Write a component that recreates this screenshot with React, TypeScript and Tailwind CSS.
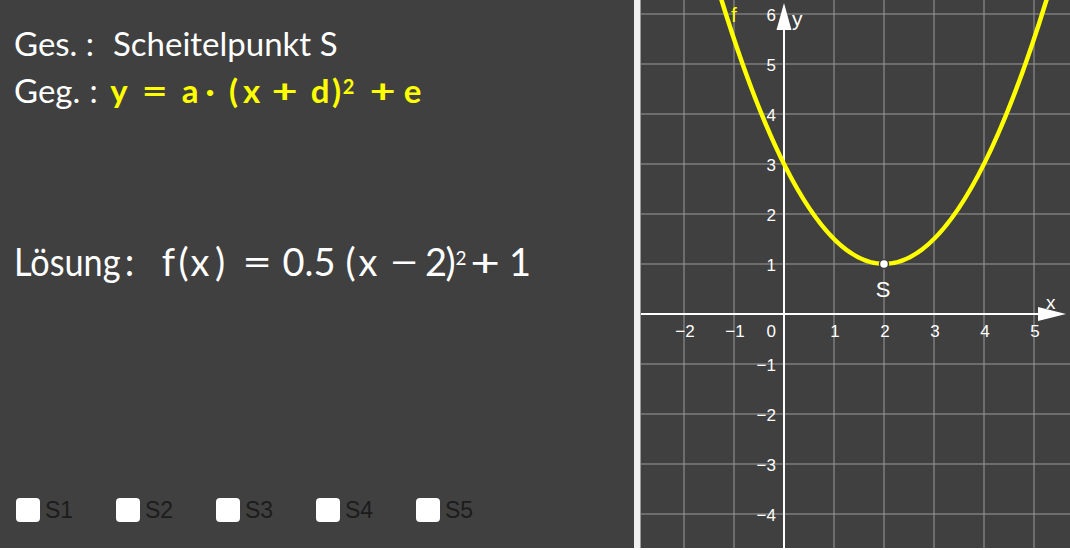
import React from "react";

const f = (x: number) => 0.5 * (x - 2) * (x - 2) + 1;
const SX = (x: number) => 784 + 50 * x;
const SY = (y: number) => 314 - 50 * y;

function Graph() {
  const vx = [684, 734, 834, 884, 934, 984, 1034];
  const hy = [14, 64, 114, 164, 214, 264, 364, 414, 464, 514];
  const x0 = -1.5,
    x1 = 5.5;
  const cy = f(x0) + (x0 - 2) * ((x1 - x0) / 2);
  const d = `M ${SX(x0)} ${SY(f(x0))} Q ${SX((x0 + x1) / 2)} ${SY(cy)} ${SX(x1)} ${SY(f(x1))}`;
  const xl: [number, string][] = [
    [-2, "\u22122"],
    [-1, "\u22121"],
    [1, "1"],
    [2, "2"],
    [3, "3"],
    [4, "4"],
    [5, "5"],
  ];
  const yl: [number, string][] = [
    [6, "6"],
    [5, "5"],
    [4, "4"],
    [3, "3"],
    [2, "2"],
    [1, "1"],
    [-1, "\u22121"],
    [-2, "\u22122"],
    [-3, "\u22123"],
    [-4, "\u22124"],
  ];
  return (
    <svg
      className="block h-full w-full"
      viewBox="641 0 429 548"
      preserveAspectRatio="none"
      style={{ fontFamily: '"Liberation Sans", Arial, sans-serif' }}
    >
      <rect x="641" y="0" width="429" height="548" fill="#404040" />
      {vx.map((x) => (
        <line key={"v" + x} x1={x} y1={0} x2={x} y2={548} stroke="#9a9a9a" strokeWidth={1} />
      ))}
      {hy.map((y) => (
        <line key={"h" + y} x1={641} y1={y} x2={1070} y2={y} stroke="#9a9a9a" strokeWidth={1} />
      ))}
      <line x1={641} y1={314} x2={1045} y2={314} stroke="#ffffff" strokeWidth={2} />
      <polygon points="1038,307 1066,314 1038,321" fill="#ffffff" />
      <line x1={784} y1={548} x2={784} y2={24} stroke="#ffffff" strokeWidth={2} />
      <polygon points="776.5,30 784,3 791.5,30" fill="#ffffff" />
      {xl.map(([v, t]) => (
        <text key={"xl" + v} x={SX(v) + 1} y={337} fill="#ffffff" fontSize={17} textAnchor="middle">
          {t}
        </text>
      ))}
      <text x={776} y={337} fill="#ffffff" fontSize={17} textAnchor="end">
        0
      </text>
      {yl.map(([v, t]) => (
        <text key={"yl" + v} x={776} y={SY(v) + 7} fill="#ffffff" fontSize={17} textAnchor="end">
          {t}
        </text>
      ))}
      <text x={1046} y={309} fill="#ffffff" fontSize={19}>
        x
      </text>
      <text x={792} y={26} fill="#ffffff" fontSize={21}>
        y
      </text>
      <text x={731} y={22} fill="#ffff00" fontSize={21}>
        f
      </text>
      <path d={d} fill="none" stroke="#ffff00" strokeWidth={4.5} />
      <circle cx={884} cy={264} r={4.5} fill="#ffffff" stroke="#404040" strokeWidth={1.5} />
      <text x={883} y={297} fill="#ffffff" fontSize={22} textAnchor="middle">
        S
      </text>
    </svg>
  );
}

type Tok = { t: string; l: number; r: number; c?: string; left?: boolean };

function TokenRow({ toks, className }: { toks: Tok[]; className: string }) {
  let prev = 0;
  return (
    <div className={"flex items-baseline whitespace-nowrap " + className}>
      {toks.map((k, i) => {
        const ml = k.l - prev;
        prev = k.r;
        return (
          <span
            key={i}
            className={"flex shrink-0 " + (k.left ? "justify-start " : "justify-center ") + (k.c ?? "")}
            style={{ marginLeft: ml, width: k.r - k.l }}
          >
            <span className="inline-block whitespace-nowrap">{k.t}</span>
          </span>
        );
      })}
    </div>
  );
}

const OP = "[&>span]:scale-x-[1.35]";
const Y = "font-bold text-[#ffff00]";

const geg: Tok[] = [
  { t: "Geg.", l: 14, r: 85, left: true },
  { t: ":", l: 90, r: 97 },
  { t: "y", l: 112, r: 126, c: Y },
  { t: "=", l: 141, r: 168, c: Y + " " + OP },
  { t: "a", l: 182, r: 198, c: Y },
  { t: "·", l: 206, r: 214, c: Y },
  { t: "(", l: 229, r: 238, c: Y },
  { t: "x", l: 240, r: 263, c: Y },
  { t: "+", l: 272, r: 298, c: Y + " " + OP },
  { t: "d", l: 310, r: 330, c: Y },
  { t: ")", l: 332, r: 341, c: Y },
  { t: "2", l: 343, r: 354, c: Y + " text-[20px] relative -top-[9px]" },
  { t: "+", l: 368, r: 397, c: Y + " " + OP },
  { t: "e", l: 403, r: 422, c: Y },
];

const loes: Tok[] = [
  { t: "Lösung", l: 14, r: 118, c: "[&>span]:scale-x-[0.9] [&>span]:origin-left", left: true },
  { t: ":", l: 126, r: 133 },
  { t: "f", l: 162, r: 175 },
  { t: "(", l: 179, r: 188 },
  { t: "x", l: 189, r: 211 },
  { t: ")", l: 215, r: 225 },
  { t: "=", l: 244, r: 271, c: OP },
  { t: "0.5", l: 288, r: 330 },
  { t: "(", l: 346, r: 355 },
  { t: "x", l: 357, r: 379 },
  { t: "−", l: 390, r: 419, c: OP },
  { t: "2", l: 429, r: 443 },
  { t: ")", l: 446, r: 455 },
  { t: "2", l: 456, r: 466, c: "text-[19px] relative -top-[11px]" },
  { t: "+", l: 473, r: 498, c: OP },
  { t: "1", l: 512, r: 528 },
];

export default function App() {
  const boxes = ["S1", "S2", "S3", "S4", "S5"];
  return (
    <div className="flex h-[548px] w-[1070px] overflow-hidden bg-[#404040]">
      <div
        className="flex w-[634px] flex-col bg-[#404040] text-white"
        style={{ fontFamily: 'Lato, "Noto Sans", sans-serif' }}
      >
        <div className="pl-[14px] pt-[20px] text-[33px] leading-[47px]">
          <div className="flex whitespace-nowrap">
            <span className="w-[99px]">Ges. :</span>
            <span>Scheitelpunkt S</span>
          </div>
        </div>
        <TokenRow toks={geg} className="text-[33px] leading-[47px]" />
        <TokenRow toks={loes} className="mt-[117px] text-[38px] leading-[50px]" />
        <div className="flex-1" />
        <div
          className="flex pb-[26px] pl-[16px]"
          style={{ fontFamily: '"Liberation Sans", Arial, sans-serif' }}
        >
          {boxes.map((b) => (
            <div key={b} className="flex w-[100px] items-center gap-[5px]">
              <div className="h-[24px] w-[24px] rounded-[4px] bg-white" />
              <span className="text-[23px] leading-[24px] text-[#1c1c1c]">{b}</span>
            </div>
          ))}
        </div>
      </div>
      <div className="w-[6px] bg-[#f0f0f0]" />
      <div className="w-[1px] bg-[#9a9a9a]" />
      <div className="flex-1">
        <Graph />
      </div>
    </div>
  );
}
